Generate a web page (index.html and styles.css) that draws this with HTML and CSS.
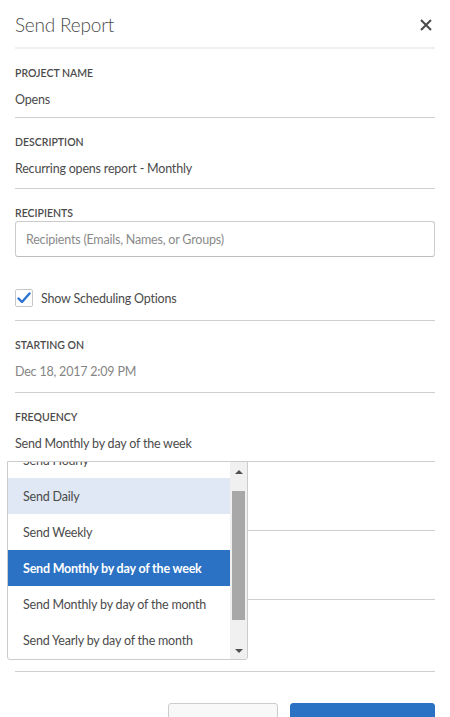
FILE: index.html
```html
<!DOCTYPE html>
<html lang="en">
<head>
<meta charset="utf-8">
<title>Send Report</title>
<link rel="stylesheet" href="styles.css">
</head>
<body>
<div class="dialog">
  <header class="dialog-header">
    <h1 class="dialog-title">Send Report</h1>
    <button class="close-btn" aria-label="Close">
      <svg width="12" height="12" viewBox="0 0 12 12"><path d="M1 1L11 11M11 1L1 11" stroke="#4b4b4b" stroke-width="2" fill="none"/></svg>
    </button>
  </header>

  <section class="field first">
    <div class="field-label">PROJECT NAME</div>
    <div class="field-value">Opens</div>
  </section>

  <section class="field">
    <div class="field-label">DESCRIPTION</div>
    <div class="field-value">Recurring opens report - Monthly</div>
  </section>

  <section class="field field-recipients">
    <div class="field-label">RECIPIENTS</div>
    <div class="text-input">Recipients (Emails, Names, or Groups)</div>
    <label class="checkbox-row">
      <span class="checkbox">
        <svg width="14" height="12" viewBox="0 0 14 12"><path d="M1.5 6.5L5 10L12.5 1.5" stroke="#2d72d2" stroke-width="2.4" fill="none" stroke-linecap="round" stroke-linejoin="round"/></svg>
      </span>
      <span class="checkbox-label">Show Scheduling Options</span>
    </label>
  </section>

  <section class="field starting">
    <div class="field-label">STARTING ON</div>
    <div class="field-value muted">Dec 18, 2017 2:09 PM</div>
  </section>

  <section class="field frequency">
    <div class="field-label">FREQUENCY</div>
    <div class="field-value">Send Monthly by day of the week</div>

    <div class="dropdown">
      <ul class="dropdown-list">
        <li class="option">Send Hourly</li>
        <li class="option hover">Send Daily</li>
        <li class="option">Send Weekly</li>
        <li class="option selected">Send Monthly by day of the week</li>
        <li class="option">Send Monthly by day of the month</li>
        <li class="option">Send Yearly by day of the month</li>
      </ul>
      <div class="scrollbar">
        <span class="arrow up"></span>
        <div class="track"><div class="thumb"></div></div>
        <span class="arrow down"></span>
      </div>
    </div>
  </section>

  <section class="field spacer s1"></section>
  <section class="field spacer s2"></section>
  <section class="field spacer s3"></section>

  <footer class="actions">
    <button class="btn btn-secondary">Cancel</button>
    <button class="btn btn-primary">Send and Schedule</button>
  </footer>
</div>
</body>
</html>
```
FILE: styles.css
```css
* { box-sizing: border-box; }
html, body { margin: 0; padding: 0; background: #fff; }
body {
  font-family: "Lato", "Open Sans", sans-serif;
  color: #4b4b4b;
  overflow: hidden;
  height: 717px;
}
.dialog {
  padding: 0 15px;
}
.dialog-header {
  height: 49px;
  display: flex;
  align-items: center;
  justify-content: space-between;
  border-bottom: 2px solid #f0f0f0;
  padding: 13px 0 10px;
}
.dialog-title {
  margin: 0;
  font-size: 19px;
  font-weight: 300;
  color: #4b4b4b;
  line-height: 24px;
  letter-spacing: -0.2px;
}
.close-btn {
  border: 0;
  background: none;
  padding: 0;
  margin-right: 3px;
  width: 12px;
  height: 12px;
  display: flex;
}
.field {
  position: relative;
  padding: 16px 0 9px;
  border-bottom: 1px solid #cfcfcf;
}
.field.first { padding-bottom: 7px; }
.field.starting { padding-bottom: 10px; }
.field.frequency { padding-bottom: 7px; }
.field-label {
  font-size: 10.5px;
  line-height: 16px;
  font-weight: 600;
  color: #4b4b4b;
}
.field-value {
  margin-top: 9px;
  font-size: 12.5px;
  letter-spacing: -0.2px;
  line-height: 20px;
}
.muted { color: #858585; }
.text-input {
  height: 36px;
  border: 1px solid #cccccc;
  border-bottom-color: #bdbdbd;
  border-radius: 3px;
  padding: 0 10px;
  display: flex;
  align-items: center;
  font-size: 12.5px;
  letter-spacing: -0.2px;
  color: #8a8a8a;
}
.field-recipients { padding-bottom: 10px; }
.checkbox-row {
  margin-top: 29px;
  height: 24px;
  display: flex;
  align-items: center;
  gap: 8px;
}
.checkbox {
  width: 18px;
  height: 18px;
  border: 1px solid #c8c8c8;
  border-radius: 2px;
  display: flex;
  align-items: center;
  justify-content: center;
}
.checkbox-label { font-size: 12.5px; letter-spacing: -0.2px; }
.spacer { height: 69px; padding: 0; }
.spacer.s3 { height: 72px; }

.dropdown {
  position: absolute;
  left: -8px;
  top: 100%;
  width: 241px;
  height: 199px;
  border: 1px solid #cccccc;
  border-radius: 0 0 3px 3px;
  background: #fff;
  display: flex;
  overflow: hidden;
  z-index: 5;
}
.dropdown-list {
  list-style: none;
  margin: -20px 0 0;
  padding: 0;
  flex: 1;
}
.option {
  height: 36px;
  display: flex;
  align-items: center;
  padding-left: 15px;
  font-size: 12.5px;
  letter-spacing: -0.2px;
  color: #4b4b4b;
}
.option.hover { background: #dfe8f4; }
.option.selected { background: #2b72c5; color: #fff; font-weight: 700; }
.scrollbar {
  width: 17px;
  flex: none;
  background: #f0f0f0;
  display: flex;
  flex-direction: column;
  align-items: center;
}
.arrow {
  flex: none;
  width: 0; height: 0;
  border-left: 4px solid transparent;
  border-right: 4px solid transparent;
}
.arrow.up { border-bottom: 4px solid #505050; margin-top: 8px; }
.arrow.down { border-top: 4px solid #505050; margin-bottom: 6px; }
.track { flex: none; width: 100%; padding: 17px 2px 29px; }
.thumb { width: 13px; height: 129px; background: #a8a8a8; }

.actions {
  display: flex;
  justify-content: flex-end;
  gap: 12px;
  margin-top: 31px;
}
.btn {
  height: 38px;
  padding-top: 4px;
  border-radius: 3px;
  font-family: inherit;
  font-size: 13px;
  font-weight: 700;
}
.btn-secondary {
  width: 110px;
  background: #f8f8f8;
  border: 1px solid #cccccc;
  color: #4b4b4b;
}
.btn-primary {
  width: 145px;
  background: #2b72c5;
  border: 1px solid #2b72c5;
  color: #fff;
}
```
